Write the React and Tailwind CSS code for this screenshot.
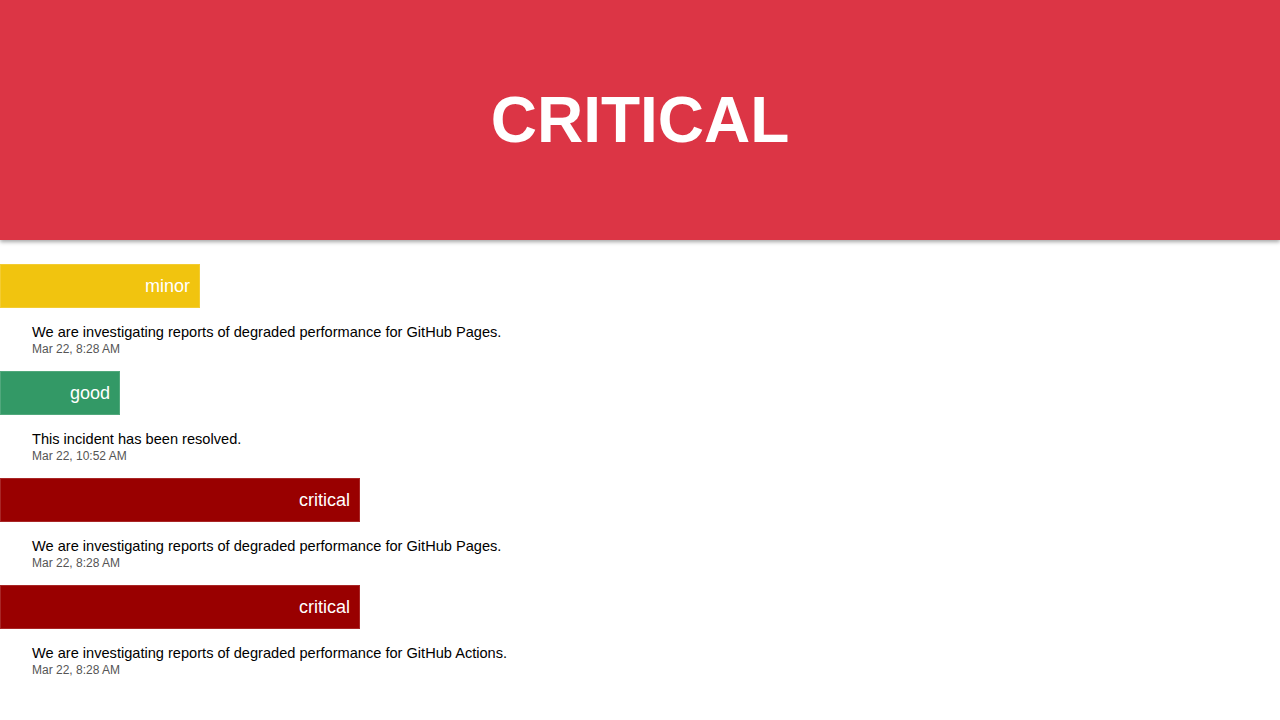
const incidents = [
  { status: 'minor', width: 'w-[200px]', color: 'bg-[#f1c40f]', text: 'We are investigating reports of degraded performance for GitHub Pages.', time: 'Mar 22, 8:28 AM' },
  { status: 'good', width: 'w-[120px]', color: 'bg-[#339966]', text: 'This incident has been resolved.', time: 'Mar 22, 10:52 AM' },
  { status: 'critical', width: 'w-[360px]', color: 'bg-[#990000]', text: 'We are investigating reports of degraded performance for GitHub Pages.', time: 'Mar 22, 8:28 AM' },
  { status: 'critical', width: 'w-[360px]', color: 'bg-[#990000]', text: 'We are investigating reports of degraded performance for GitHub Actions.', time: 'Mar 22, 8:28 AM' },
];

export default function App() {
  return (
    <div className="min-h-screen bg-white font-['Liberation_Sans',Arial,sans-serif]">
      <header className="h-[240px] bg-[#dc3545] flex items-center justify-center shadow-[0_2px_4px_rgba(0,0,0,0.35)]">
        <h1 className="text-[64px] font-bold text-white leading-none">CRITICAL</h1>
      </header>
      <main className="pt-6">
        {incidents.map((inc, i) => (
          <div key={i} className="pb-[13px]">
            <div className={`${inc.width} ${inc.color} h-[44px] border border-white/15 flex items-center justify-end pr-[9px]`}>
              <span className="text-white text-[18px]">{inc.status}</span>
            </div>
            <div className="pl-8 pt-[15px]">
              <div className="text-[14.6px] leading-[18px] text-black">{inc.text}</div>
              <div className="text-[12px] leading-[17px] text-[#555]">{inc.time}</div>
            </div>
          </div>
        ))}
      </main>
    </div>
  );
}
